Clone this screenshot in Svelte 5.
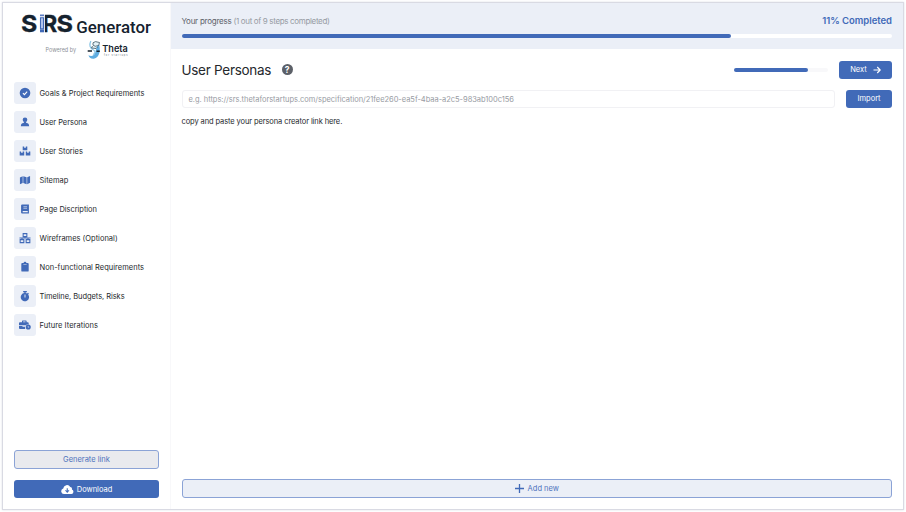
<script>
  const items = [
    { label: 'Goals & Project Requirements', icon: 'check', ls: 0 },
    { label: 'User Persona', icon: 'user', ls: -0.04 },
    { label: 'User Stories', icon: 'boxes', ls: -0.02 },
    { label: 'Sitemap', icon: 'map', ls: 0 },
    { label: 'Page Discription', icon: 'book', ls: -0.04 },
    { label: 'Wireframes (Optional)', icon: 'network', ls: 0 },
    { label: 'Non-functional Requirements', icon: 'clipboard', ls: 0.02 },
    { label: 'Timeline, Budgets, Risks', icon: 'stopwatch', ls: -0.06 },
    { label: 'Future Iterations', icon: 'briefcase', ls: 0.05 }
  ];
</script>

<div class="page">
  <div class="frame">
    <aside>
      <svg class="logo" width="145" height="52" viewBox="14 10 145 52">
        <g fill="#15222e">
          <g font-family="Inter, sans-serif" font-weight="700" font-size="23.500" stroke="#15222e" stroke-width=".3">
            <text x="21" y="32.300" textLength="16.300" lengthAdjust="spacingAndGlyphs">S</text>
            <text x="42.300" y="32.300" textLength="15" lengthAdjust="spacingAndGlyphs">R</text>
            <text x="56.400" y="32.300" textLength="16.500" lengthAdjust="spacingAndGlyphs">S</text>
          </g>
          <text x="76.200" y="32.600" font-family="Roboto, sans-serif" font-weight="500" font-size="17.300" textLength="74.800" lengthAdjust="spacingAndGlyphs">Generator</text>
        </g>
        <path d="M39.500 13.500h5.400v19.500h-5.400z" fill="#fff" />
        <path d="M40 14.500h4v1.700h-4z" fill="#5b7cc4" />
        <path d="M40.500 17.800h3v11h-3z" fill="#b7c9ef" stroke="#416ab8" stroke-width="1.100" />
        <path d="M40 29.300h4v3h-4z" fill="#416ab8" />
        <text x="45.500" y="52" font-family="Inter, sans-serif" font-size="6" fill="#8d9197" textLength="30.500" lengthAdjust="spacingAndGlyphs">Powered by</text>
        <path d="M98.800 43.500c2 5.500 1.200 14.500-5 15.200-3 .3-5-1.500-5.300-3.500 3 1.500 5.800.5 6.800-2.700.8-3 .9-6 3.500-9z" fill="#5eace0" />
        <path d="M90.800 41c-1.800 4-1 7.500 2.700 9 2.200 1 2 3.500-.5 4.500" fill="none" stroke="#8cc6e6" stroke-width="1.300" />
        <path d="M93 42.800l2.500-1.200 4 .9-.8 3-3.500.8-2.200-1.200zM92.500 46l-1 2 4.500.5 1.500-1.500" fill="#e4f2f7" stroke="#25404f" stroke-width=".7" />
        <path d="M87.700 51h4.300M96.500 51.200h3.300" stroke="#14202b" stroke-width="1.500" />
        <text x="102.300" y="51.700" font-family="Inter, sans-serif" font-weight="600" font-size="9.200" fill="#17242f" textLength="25.500" lengthAdjust="spacingAndGlyphs">Theta</text>
        <text x="104" y="55.500" font-family="Inter, sans-serif" font-size="2.400" fill="#64717a" textLength="23.500">for startups</text>
      </svg>

      <nav>
        {#each items as item}
          <div class="item">
            <span class="tile">
              <svg width="12" height="12" viewBox="-1 -1 26 26" fill="currentColor">
                {#if item.icon === 'check'}
                  <circle cx="12" cy="12" r="11.500" />
                  <path d="M7.500 12.300l3.200 3.200 6-6.300" fill="none" stroke="#fff" stroke-width="2.400" />
                {:else if item.icon === 'user'}
                  <circle cx="12" cy="7" r="5" />
                  <path d="M9.500 11h5v3h-5zM3 21c0-4.500 2.500-7 5.500-7h7c3 0 5.500 2.500 5.500 7z" />
                {:else if item.icon === 'boxes'}
                  <path d="M7 2h3.200v3.500l1.800-1 1.800 1V2H17v8.500H7zM.5 13h3v3.500l1.700-1 1.700 1V13h3.400v8.500H.5zM13.700 13h3v3.500l1.700-1 1.700 1V13h3.400v8.500h-9.800z" />
                {:else if item.icon === 'map'}
                  <path d="M1 6.500l6-2.500v14.700L1 21zM8.300 4l7.200 2v15l-7.200-2.300zM16.800 6L23 3.500V18l-6.200 3z" />
                {:else if item.icon === 'book'}
                  <path fill-rule="evenodd" d="M6 2h14.500v20H6a2.500 2.500 0 0 1-2.500-2.500v-15A2.500 2.500 0 0 1 6 2zM8.500 6.500v1.400h8V6.500zm0 3v1.400h8V9.500zM7 16.500v2.300h11v-2.300z" />
                {:else if item.icon === 'network'}
                  <path d="M8 2.500h8V9H8zM1.500 15.500h8V22h-8zM14.500 15.500h8V22h-8zM12 9v3.200M0 12.200h24M5.500 12v3.500M18.500 12v3.500" fill="none" stroke="currentColor" stroke-width="2.300" />
                {:else if item.icon === 'clipboard'}
                  <path fill-rule="evenodd" d="M6 3.500h3a3 3 0 0 1 6 0h3A2 2 0 0 1 20 5.500v14.500a2 2 0 0 1-2 2H6a2 2 0 0 1-2-2V5.500a2 2 0 0 1 2-2zm2.500 3v1.200h7V6.500z" />
                {:else if item.icon === 'stopwatch'}
                  <path fill-rule="evenodd" d="M8 1h8v2.700h-2.500v1.800l3 1.200L18.500 5l2 2-1.700 1.800A9 9 0 1 1 10.500 5.500V3.700H8zM11 9v6h2V9z" />
                {:else}
                  <path fill-rule="evenodd" d="M5.500 6V3.500A1.500 1.500 0 0 1 7 2h7a1.500 1.500 0 0 1 1.500 1.500V6H18a2 2 0 0 1 2 2v3h-4l-2 1.500H-1V8a2 2 0 0 1 2-2zM8 4.500V6h5V4.500zM-1 14h7.500v2H12l.5 4.500H1a2 2 0 0 1-2-2z" />
                  <circle cx="19" cy="16.500" r="5.500" />
                  <path d="M19 14v3h2" fill="none" stroke="#ebeff7" stroke-width="1.200" />
                {/if}
              </svg>
            </span>
            <span class="label" style="letter-spacing: {item.ls}px">{item.label}</span>
          </div>
        {/each}
      </nav>

      <div class="side-actions">
        <button class="generate"><span>Generate link</span></button>
        <button class="solid download">
          <svg width="13" height="11" viewBox="0 0 26 22">
            <path d="M6 20a5.500 5.500 0 0 1-1.500-10.800A7.500 7.500 0 0 1 18.500 6a4 4 0 0 1 3.300 5A4.700 4.700 0 0 1 21 20z" fill="#fff" />
            <path d="M12.500 8.500v7M9 12.500l3.500 4 3.500-4" fill="none" stroke="#416ab8" stroke-width="2.200" />
          </svg>
          <span>Download</span>
        </button>
      </div>
    </aside>

    <main>
      <header>
        <div class="progress-row">
          <span class="steps"><b>Your progress</b> (1 out of 9 steps completed)</span>
          <span class="completed">11% Completed</span>
        </div>
        <div class="track"><div class="fill"></div></div>
      </header>

      <section>
        <div class="title-row">
          <h1>User Personas</h1>
          <span class="help">?</span>
          <div class="mini"><div></div></div>
          <button class="solid next">
            <span>Next</span>
            <svg width="8" height="8" viewBox="0 0 16 16" fill="none" stroke="#fff" stroke-width="2.400"><path d="M1 8h13M8.500 2l6 6-6 6" /></svg>
          </button>
        </div>
        <div class="import-row">
          <div class="field"><span>e.g. https://srs.thetaforstartups.com/specification/21fee260-ea5f-4baa-a2c5-983ab100c156</span></div>
          <button class="solid import"><span>Import</span></button>
        </div>
        <p>copy and paste your persona creator link here.</p>
        <button class="add">
          <svg width="9" height="9" viewBox="0 0 9 9" stroke="#416ab8" stroke-width="1.300"><path d="M4.500 0v9M0 4.500h9" /></svg>
          <span>Add new</span>
        </button>
      </section>
    </main>
  </div>
</div>

<style>
  :global(body) { margin: 0; background: #fff; }
  .page {
    box-sizing: border-box;
    width: 906px;
    height: 512px;
    padding: 2px;
    font: 400 7.500px/10px Inter, "Noto Sans", sans-serif;
    color: #25282c;
  }
  .frame {
    box-sizing: border-box;
    display: flex;
    width: 902px;
    height: 508px;
    border: 1px solid #d9dae3;
    box-shadow: 0 0 2px #dedfe6;
    background: #fff;
  }
  aside {
    box-sizing: border-box;
    flex: none;
    width: 167.500px;
    padding: 7px 11px 11px;
    display: flex;
    flex-direction: column;
    border-right: 1px solid #f8f8fa;
  }
  .logo { display: block; flex: none; }
  nav { display: flex; flex-direction: column; gap: 7px; margin-top: 19.500px; }
  .item { display: flex; align-items: center; height: 22px; gap: 3.500px; }
  .tile {
    display: flex;
    align-items: center;
    justify-content: center;
    width: 22px;
    height: 22px;
    border-radius: 3px;
    background: #ebeff7;
    color: #416ab8;
  }
  .label { white-space: nowrap; padding-top: 2px; }
  button {
    box-sizing: border-box;
    display: flex;
    align-items: center;
    justify-content: center;
    padding: 0;
    border: 0;
    border-radius: 3px;
    font: inherit;
    white-space: nowrap;
  }
  button span { padding-top: 1px; }
  .solid { background: #416ab8; color: #fff; }
  .side-actions { display: flex; flex-direction: column; gap: 11px; margin: auto -0.500px 0 0; }
  .generate { height: 19px; border: 1px solid #8ba3d6; background: #e9eaee; color: #4d72bc; }
  .download { height: 18px; gap: 3px; }
  main { flex: 1; display: flex; flex-direction: column; min-width: 0; }
  header { box-sizing: border-box; height: 46px; padding: 12px 11px 0; background: #ebeff7; }
  .progress-row { display: flex; align-items: center; justify-content: space-between; height: 12px; }
  .steps { color: #969ba3; font-size: 8px; letter-spacing: -0.34px; }
  .steps b { font-weight: 400; color: #5d6269; letter-spacing: -0.24px; }
  .completed { color: #416ab8; font-size: 9.500px; font-weight: 600; letter-spacing: -0.03px; }
  .track { height: 4px; margin-top: 7px; border-radius: 2px; background: #fff; }
  .fill { width: 549.500px; height: 4px; border-radius: 2px; background: #416ab8; }
  section { flex: 1; display: flex; flex-direction: column; padding: 11px 11px; }
  .title-row { display: flex; align-items: center; height: 19px; }
  h1 { margin: 0; width: 100px; padding-top: 1px; font-size: 13.500px; line-height: 19px; font-weight: 400; white-space: nowrap; letter-spacing: -0.28px; }
  .help { width: 11.500px; height: 11.500px; border-radius: 50%; background: #5c6068; color: #fff; font-size: 8.500px; line-height: 12px; font-weight: 700; text-align: center; }
  .mini { width: 94px; height: 4px; margin-left: auto; border-radius: 2px; background: #f8f8fa; }
  .mini div { width: 74px; height: 4px; border-radius: 2px; background: #416ab8; }
  .next { width: 53px; height: 18px; margin-left: 11px; gap: 6px; }
  .import-row { display: flex; margin-top: 10.500px; gap: 11px; }
  .field { box-sizing: border-box; flex: 1; display: flex; align-items: center; height: 18px; padding-left: 6px; border: 1px solid #f1f1f4; border-radius: 3px; color: #989ba3; white-space: nowrap; letter-spacing: -0.03px; }
  .field span { padding-top: 2px; }
  .import { width: 46px; height: 18px; }
  p { margin: 9px 0 0; letter-spacing: -0.1px; }
  .add { height: 19px; margin-top: auto; gap: 4px; border: 1px solid #8ba3d6; background: #ebeff7; color: #4d72bc; }
</style>
